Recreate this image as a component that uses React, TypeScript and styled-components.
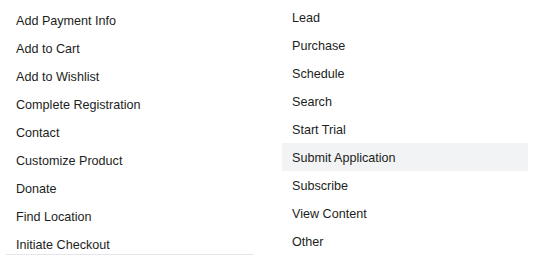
import React from 'react';
import styled, { createGlobalStyle } from 'styled-components';

const leftEvents = [
  'Add Payment Info',
  'Add to Cart',
  'Add to Wishlist',
  'Complete Registration',
  'Contact',
  'Customize Product',
  'Donate',
  'Find Location',
  'Initiate Checkout',
];

const rightEvents = [
  'Lead',
  'Purchase',
  'Schedule',
  'Search',
  'Start Trial',
  'Submit Application',
  'Subscribe',
  'View Content',
  'Other',
];

const App = () => {
  return (
    <>
      <GlobalStyle />
      <S.Page>
        <S.LeftList>
          {leftEvents.map((name) => (
            <S.Option key={name} $isHovered={false}>
              {name}
            </S.Option>
          ))}
        </S.LeftList>
        <S.RightList>
          {rightEvents.map((name) => (
            <S.Option key={name} $isHovered={name === 'Submit Application'}>
              {name}
            </S.Option>
          ))}
        </S.RightList>
      </S.Page>
    </>
  );
};

export default App;

const GlobalStyle = createGlobalStyle`
  body {
    margin: 0;
    background: #ffffff;
    font-family: 'Liberation Sans', Arial, sans-serif;
  }
`;

const S = {
  Page: styled.div`
    display: grid;
    grid-template-columns: 248px 246px;
    column-gap: 28px;
    align-items: start;

    width: 538px;
    height: 256px;
    padding-left: 6px;
    box-sizing: border-box;
    overflow: hidden;
  `,

  LeftList: styled.div`
    display: flex;
    flex-direction: column;

    height: 248px;
    margin-top: 6px;
    overflow: hidden;
    border-bottom: 1px solid #e4e6eb;
  `,

  RightList: styled.div`
    display: flex;
    flex-direction: column;

    margin-top: 3px;
  `,

  Option: styled.div<{ $isHovered: boolean }>`
    display: flex;
    align-items: center;
    flex-shrink: 0;

    height: 28px;
    padding: 1px 0 0 10px;
    box-sizing: border-box;

    background-color: ${({ $isHovered }) => ($isHovered ? '#f2f3f5' : 'transparent')};

    font-size: 12.6px;
    color: #1c1e21;
    white-space: nowrap;
  `,
};
